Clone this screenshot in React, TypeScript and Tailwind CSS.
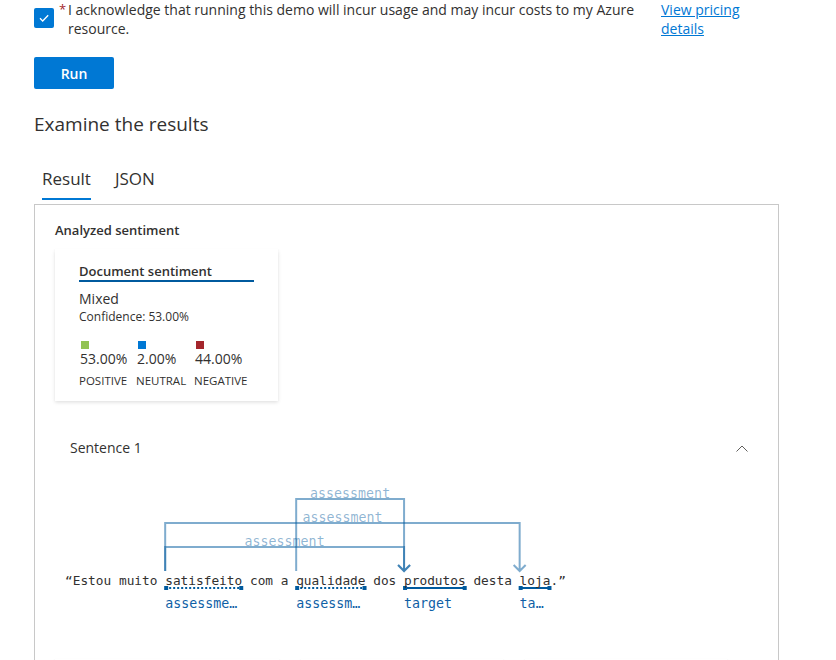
import React from "react";

const CW = 7.706;
const X0 = 10;
const cx = (i: number) => X0 + i * CW;

const words = {
  satisfeito: { s: 13, n: 10 },
  qualidade: { s: 30, n: 9 },
  produtos: { s: 44, n: 8 },
  loja: { s: 59, n: 4 },
};

const BOTTOM = 91;
const UL = 108;

function Relation({ from, to, y }: { from: number; to: number; y: number }) {
  const x1 = cx(from);
  const x2 = cx(to);
  const mid = (x1 + x2) / 2;
  return (
    <g>
      <path
        d={`M${x1} ${BOTTOM} V${y} H${x2} V${BOTTOM} M${x2 - 6} ${BOTTOM - 6} L${x2} ${BOTTOM} L${x2 + 6} ${BOTTOM - 6}`}
        fill="none"
        stroke="#005a9e"
        strokeOpacity={0.5}
        strokeWidth={2}
      />
      <text
        x={mid}
        y={y - 1}
        textAnchor="middle"
        fontSize="13.3"
        fontFamily="'DejaVu Sans Mono', monospace"
        fill="#005a9e"
        fillOpacity={0.45}
      >
        assessment
      </text>
    </g>
  );
}

function Underline({ s, n, dotted }: { s: number; n: number; dotted?: boolean }) {
  const x1 = cx(s);
  const x2 = cx(s + n);
  return (
    <g>
      <line
        x1={x1}
        x2={x2}
        y1={UL}
        y2={UL}
        stroke="#005a9e"
        strokeWidth={2}
        strokeDasharray={dotted ? "2 2" : undefined}
      />
      <rect x={x1 - 1} y={UL - 2} width={4} height={4} fill="#005a9e" />
      <rect x={x2 - 3} y={UL - 2} width={4} height={4} fill="#005a9e" />
    </g>
  );
}

function Word({ text, label }: { text: string; label: string }) {
  return (
    <span className="relative inline-block">
      {text}
      <span className="absolute left-0 top-[24px] w-full overflow-hidden text-ellipsis whitespace-nowrap text-[13.3px] leading-[18px] text-[#0f5fa6]">
        {label}
      </span>
    </span>
  );
}

const shadow = "shadow-[0_1.6px_3.6px_rgba(0,0,0,0.13),0_0.3px_0.9px_rgba(0,0,0,0.11)]";

export default function App() {
  return (
    <div className="w-[836px] h-[660px] overflow-hidden bg-white text-[#323130] font-['Open_Sans','Noto_Sans',sans-serif]">
      <div className="pl-[34px]">
        {/* acknowledge row */}
        <div className="flex items-start">
          <div className="mt-[8px] w-[20px] h-[20px] rounded-[2px] bg-[#0078d4] flex items-center justify-center shrink-0">
            <svg width="12" height="12" viewBox="0 0 12 12">
              <path d="M2 6.3 L4.7 9 L10.2 3.3" fill="none" stroke="white" strokeWidth="1.3" />
            </svg>
          </div>
          <span className="ml-[5px] mt-[1px] w-[9px] text-[#a4262c] text-[13px] leading-[16px]">*</span>
          <div className="w-[573px] text-[14px] leading-[19px]">
            I acknowledge that running this demo will incur usage and may incur costs to my Azure resource.
          </div>
          <a href="#" className="ml-[20px] w-[90px] text-[14px] leading-[19px] text-[#0078d4] underline">
            View pricing details
          </a>
        </div>

        <button className="mt-[19px] w-[80px] h-[32px] rounded-[2px] bg-[#0078d4] text-white text-[14px] font-semibold">
          Run
        </button>

        <h2 className="mt-[21px] text-[19px] leading-[28px] font-medium">Examine the results</h2>

        {/* tabs */}
        <div className="mt-[29px] ml-[8px] flex gap-[24px] text-[17px] leading-[24px]">
          <div className="pb-[7px] border-b-2 border-[#0078d4]">Result</div>
          <div className="pb-[7px] border-b-2 border-transparent">JSON</div>
        </div>

        {/* panel */}
        <div className="mt-[4px] w-[745px] border border-[#c8c8c8] pl-[20px] pr-[20px] pt-[16px]">
          <div className="text-[13px] leading-[18px] font-semibold">Analyzed sentiment</div>

          <div className={`mt-[10px] w-[223px] h-[152px] bg-white px-[24px] pt-[13px] ${shadow}`}>
            <div className="text-[13px] leading-[18px] font-semibold border-b-2 border-[#005a9e]">
              Document sentiment
            </div>
            <div className="mt-[8px] text-[14px] leading-[18px]">Mixed</div>
            <div className="mt-[1px] text-[12px] leading-[16px]">Confidence: 53.00%</div>
            <div className="mt-[16px] flex">
              {[
                { c: "bg-[#92c353]", p: "53.00%", l: "POSITIVE", w: "w-[57px]" },
                { c: "bg-[#0078d4]", p: "2.00%", l: "NEUTRAL", w: "w-[58px]" },
                { c: "bg-[#a4262c]", p: "44.00%", l: "NEGATIVE", w: "w-[60px]" },
              ].map((s) => (
                <div key={s.l} className={`${s.w} shrink-0`}>
                  <div className={`ml-[2px] w-[8px] h-[8px] ${s.c}`} />
                  <div className="mt-[1px] ml-[1px] text-[14px] leading-[18px]">{s.p}</div>
                  <div className="mt-[5px] text-[11.5px] leading-[16px] whitespace-nowrap">{s.l}</div>
                </div>
              ))}
            </div>
          </div>

          {/* sentence header */}
          <div className="mt-[27px] h-[40px] flex items-center justify-between pl-[15px] pr-[10px]">
            <span className="text-[14px] leading-[18px]">Sentence 1</span>
            <svg width="12" height="7" viewBox="0 0 12 7">
              <path d="M0.5 6.5 L6 1 L11.5 6.5" fill="none" stroke="#605e5c" strokeWidth="1" />
            </svg>
          </div>

          {/* diagram */}
          <div className="mt-[12px] relative h-[140px] pt-[91px] pl-[10px]">
            <svg className="absolute top-0 left-0 pointer-events-none" width="600" height="140">
              <Relation from={words.qualidade.s} to={words.produtos.s} y={19} />
              <Relation from={words.satisfeito.s} to={words.loja.s} y={43} />
              <Relation from={words.satisfeito.s} to={words.produtos.s} y={67} />
              <Underline s={words.satisfeito.s} n={words.satisfeito.n} dotted />
              <Underline s={words.qualidade.s} n={words.qualidade.n} dotted />
              <Underline s={words.produtos.s} n={words.produtos.n} />
              <Underline s={words.loja.s} n={words.loja.n} />
            </svg>
            <div className="relative whitespace-pre text-[12.8px] leading-[20px] text-[#323130] font-['DejaVu_Sans_Mono',monospace]">
              {"“Estou muito "}
              <Word text="satisfeito" label="assessment" />
              {" com a "}
              <Word text="qualidade" label="assessment" />
              {" dos "}
              <Word text="produtos" label="target" />
              {" desta "}
              <Word text="loja" label="target" />
              {".”"}
            </div>
          </div>

          {/* next cards (cut off) */}
          <div className="mt-[39px] flex gap-[22px]">
            <div className={`w-[224px] h-[150px] bg-white ${shadow}`} />
            <div className={`w-[202px] h-[150px] bg-white ${shadow}`} />
            <div className={`w-[202px] h-[150px] bg-white ${shadow}`} />
          </div>
        </div>
      </div>
    </div>
  );
}
